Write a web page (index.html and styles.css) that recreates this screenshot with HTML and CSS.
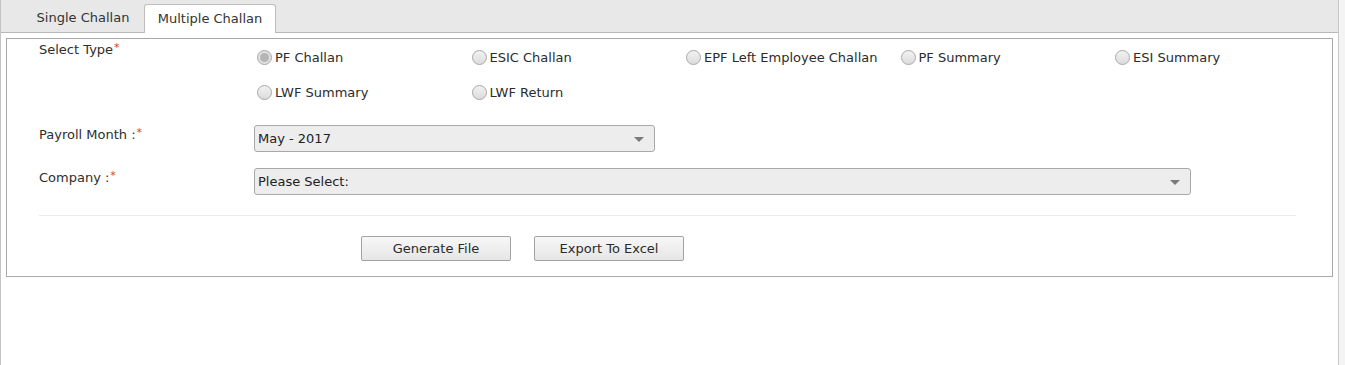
FILE: index.html
```html
<!DOCTYPE html>
<html>
<head>
<meta charset="utf-8">
<link rel="stylesheet" href="styles.css">
</head>
<body>
<div class="frame">
  <div class="tabbar">
    <div class="tab">Single Challan</div>
    <div class="tab active">Multiple Challan</div>
  </div>
  <div class="panel">
    <div class="row type-row">
      <div class="label wide">Select Type<span class="req">*</span></div>
      <div class="radios">
        <label class="opt"><span class="radio checked"></span>PF Challan</label>
        <label class="opt"><span class="radio"></span>ESIC Challan</label>
        <label class="opt"><span class="radio"></span>EPF Left Employee Challan</label>
        <label class="opt"><span class="radio"></span>PF Summary</label>
        <label class="opt"><span class="radio"></span>ESI Summary</label>
        <label class="opt"><span class="radio"></span>LWF Summary</label>
        <label class="opt"><span class="radio"></span>LWF Return</label>
      </div>
    </div>
    <div class="row field-row">
      <div class="label narrow">Payroll Month :<span class="req">*</span></div>
      <div class="select month"><span>May - 2017</span></div>
    </div>
    <div class="row field-row">
      <div class="label narrow">Company :<span class="req">*</span></div>
      <div class="select company"><span>Please Select:</span></div>
    </div>
    <div class="sep"></div>
    <div class="buttons">
      <button class="btn">Generate File</button>
      <button class="btn">Export To Excel</button>
    </div>
  </div>
</div>
</body>
</html>
```
FILE: styles.css
```css
html, body {
  margin: 0;
  padding: 0;
}
body {
  background: #f4f4f4;
  font-family: "DejaVu Sans", Verdana, sans-serif;
  font-size: 13px;
  color: #2b2b2b;
  width: 1345px;
  height: 365px;
  overflow: hidden;
}
.frame {
  width: 1337px;
  height: 365px;
  background: #fff;
  border-left: 1px solid #c4c4c4;
  border-right: 1px solid #c8c8c8;
}
.tabbar {
  height: 32px;
  background: #e8e8e8;
  border-bottom: 1px solid #b8b8b8;
  display: flex;
  align-items: flex-end;
  padding-left: 21px;
}
.tab {
  width: 122px;
  height: 28px;
  line-height: 27px;
  text-align: center;
  color: #333;
  font-size: 13px;
  box-sizing: border-box;
}
.tab.active {
  width: 132px;
  background: #fff;
  border: 1px solid #bdbdbd;
  border-bottom: none;
  border-radius: 3px 3px 0 0;
  margin-bottom: -1px;
  height: 29px;
  line-height: 28px;
}
.panel {
  margin: 5px 0 0 5px;
  width: 1327px;
  border: 1px solid #a9a9a9;
  padding: 1px 36px 15px 32px;
  box-sizing: border-box;
}
.row {
  display: flex;
}
.label {
  width: 215px;
  flex: none;
  line-height: 15px;
  color: #2e2e2e;
}
.label.narrow {
  font-size: 13px;
  padding-top: 0;
}
.req {
  color: #d23a3a;
  font-size: 11px;
  vertical-align: 3px;
  margin-left: 1px;
}
.radios {
  display: grid;
  grid-template-columns: repeat(5, 214.5px);
  grid-auto-rows: 35px;
}
.opt {
  display: flex;
  align-items: center;
  padding-left: 3px;
  color: #2b2b2b;
}
.radio {
  width: 13px;
  height: 13px;
  border-radius: 50%;
  border: 1px solid #a8a8a8;
  background: linear-gradient(#f2f2f2, #dcdcdc);
  margin-right: 3px;
  position: relative;
  flex: none;
}
.radio.checked {
  background: #e0e0e0;
}
.radio.checked::after {
  content: "";
  position: absolute;
  left: 2px;
  top: 2px;
  width: 9px;
  height: 9px;
  border-radius: 50%;
  background: #b5b5b5;
}
.field-row {
  margin-top: 15px;
}
.field-row + .field-row {
  margin-top: 16px;
}
.select {
  height: 27px;
  box-sizing: border-box;
  border: 1px solid #a9a9a9;
  border-radius: 3px;
  background: #ededed;
  display: flex;
  align-items: center;
  justify-content: space-between;
  padding: 0 10px 0 3px;
  font-size: 13px;
  color: #222;
}
.select::after {
  content: "";
  border-left: 5px solid transparent;
  border-right: 5px solid transparent;
  border-top: 5px solid #7a7a7a;
  margin-top: 1px;
}
.select.month {
  width: 401px;
}
.select.company {
  width: 937px;
}
.sep {
  height: 1px;
  background: #ececec;
  margin-top: 20px;
}
.buttons {
  display: flex;
  gap: 23px;
  padding-left: 322px;
  margin-top: 20px;
}
.btn {
  width: 150px;
  height: 25px;
  border: 1px solid #a3a3a3;
  border-radius: 2px;
  background: linear-gradient(#f7f7f7, #e6e6e6);
  font-family: "DejaVu Sans", Verdana, sans-serif;
  font-size: 13px;
  color: #2b2b2b;
  padding: 0;
}
```
